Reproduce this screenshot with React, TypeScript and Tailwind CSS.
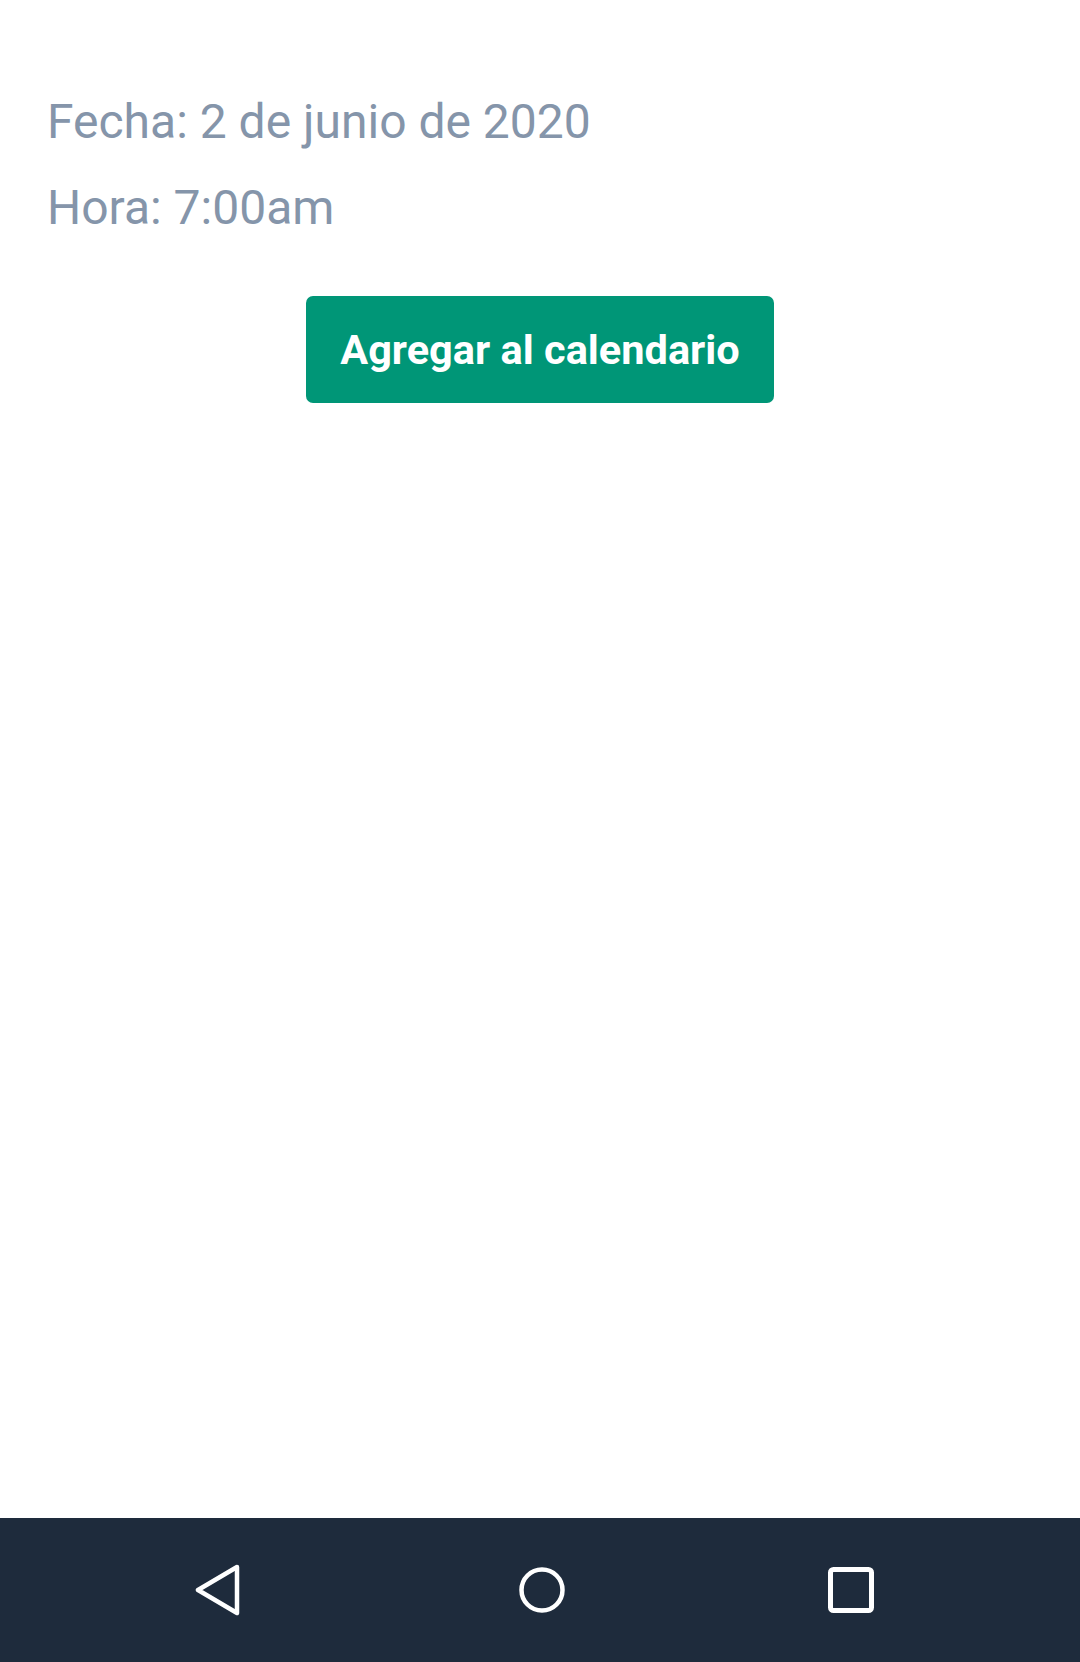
import React from 'react';

const NavBar: React.FC = () => (
  <nav className="h-[144px] bg-[#1e2b3c] flex items-center pl-[194px]">
    <svg width="46" height="52" viewBox="0 0 46 52" fill="none" className="shrink-0">
      <path d="M43 3 L4 26 L43 49 Z" stroke="white" strokeWidth="4.5" strokeLinejoin="round" />
    </svg>
    <svg width="46" height="46" viewBox="0 0 46 46" fill="none" className="ml-[279px] shrink-0">
      <circle cx="23" cy="23" r="20.5" stroke="white" strokeWidth="4.5" />
    </svg>
    <svg width="46" height="46" viewBox="0 0 46 46" fill="none" className="ml-[263px] shrink-0">
      <rect x="2.5" y="2.5" width="41" height="41" rx="3" stroke="white" strokeWidth="5" />
    </svg>
  </nav>
);

export default function App() {
  return (
    <div className="min-h-screen flex flex-col bg-white" style={{ fontFamily: 'Roboto, "Noto Sans", sans-serif' }}>
      <main className="flex-1 pt-[79px]">
        <div className="pl-[47px] text-[48px] leading-[86px] text-[#8595aa]">
          <p>Fecha: 2 de junio de 2020</p>
          <p>Hora: 7:00am</p>
        </div>
        <div className="mt-[45px] flex justify-center">
          <button className="h-[107px] w-[468px] rounded-[7px] bg-[#009677] text-white text-[41.5px] font-bold leading-none">
            Agregar al calendario
          </button>
        </div>
      </main>
      <NavBar />
    </div>
  );
}
